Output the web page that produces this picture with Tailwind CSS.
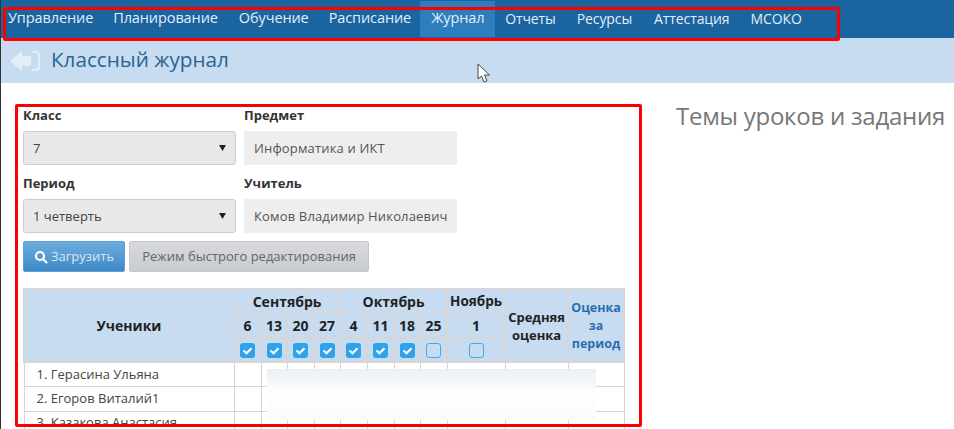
<!DOCTYPE html>
<html lang="ru">
  <head>
    <meta charset="UTF-8">
    <title>Классный журнал</title>
    <script src="https://cdn.jsdelivr.net/npm/@tailwindcss/browser@4"></script>
  </head>
  <body class="relative h-[429px] w-[954px] overflow-hidden bg-white font-['Open_Sans',sans-serif] text-[#333]">
    <div class="absolute left-0 top-0 z-30 h-full w-[1px] bg-[#333]"></div>

    <!-- Nav -->
    <nav class="flex h-[38px] bg-[#1a64a0] pl-[8px] pt-[1px] text-[14.5px] tracking-[-0.1px] text-[#e6eef6]">
      <a class="flex h-[36px] items-center pb-[2px]">Управление</a>
      <a class="ml-[20px] flex h-[36px] items-center pb-[2px]">Планирование</a>
      <a class="ml-[21px] flex h-[36px] items-center pb-[2px]">Обучение</a>
      <a class="ml-[20px] flex h-[36px] items-center pb-[2px]">Расписание</a>
      <a class="ml-[9px] flex h-[36px] w-[75px] items-center bg-[#2e7dbd] pb-[2px] pl-[11px]">Журнал</a>
      <a class="ml-[10px] flex h-[36px] items-center pb-[2px] text-[14px]">Отчеты</a>
      <a class="ml-[21px] flex h-[36px] items-center pb-[2px] text-[14px]">Ресурсы</a>
      <a class="ml-[22px] flex h-[36px] items-center pb-[2px] text-[14px]">Аттестация</a>
      <a class="ml-[21px] flex h-[36px] items-center pb-[2px] text-[14px]">МСОКО</a>
    </nav>

    <!-- Title bar -->
    <header class="flex h-[45px] items-center bg-[#c7dcf0] pl-[10px]">
      <svg class="h-[20px] w-[30px]" viewBox="0 0 30 20" fill="#e3eef8">
        <path d="M0 10 12 0v5h9v10h-9v5z"/>
        <path d="M22 1h4a3 3 0 0 1 3 3v12a3 3 0 0 1-3 3h-4" fill="none" stroke="#e3eef8" stroke-width="2"/>
      </svg>
      <h1 class="ml-[11px] pb-[1px] text-[20.7px] text-[#2a6496]">Классный журнал</h1>
    </header>

    <main class="flex pl-[23px] pt-[23px]">
      <section class="w-[601px] shrink-0">
        <div class="grid grid-cols-[213px_213px] gap-x-[8px] text-[13px]">
          <label class="h-[25px] font-bold leading-[18px]">Класс</label>
          <label class="h-[25px] font-bold leading-[18px]">Предмет</label>
          <div class="flex h-[34px] items-center justify-between rounded-[3px] border border-[#ccc] bg-[#e8e8e8] pl-[9px] pr-[9px] text-[#444]">
            <span class="pt-[2px]">7</span>
            <svg class="h-[6px] w-[7px]" viewBox="0 0 7 6"><path d="M0 0h7L3.500 6z" fill="#222"/></svg>
          </div>
          <div class="flex h-[34px] items-center rounded-[2px] bg-[#eee] pl-[10px] pt-[2px] tracking-[0.15px] text-[#555]">Информатика и ИКТ</div>
          <label class="mt-[9px] h-[25px] font-bold leading-[18px]">Период</label>
          <label class="mt-[9px] h-[25px] font-bold leading-[18px]">Учитель</label>
          <div class="flex h-[34px] items-center justify-between rounded-[3px] border border-[#ccc] bg-[#e8e8e8] pl-[9px] pr-[9px] text-[#444]">
            <span class="pt-[2px]">1 четверть</span>
            <svg class="h-[6px] w-[7px]" viewBox="0 0 7 6"><path d="M0 0h7L3.500 6z" fill="#222"/></svg>
          </div>
          <div class="flex h-[34px] items-center rounded-[2px] bg-[#eee] pl-[10px] pt-[2px] tracking-[0.15px] text-[#555]">Комов Владимир Николаевич</div>
        </div>

        <div class="mt-[8px] flex gap-[4px] text-[13px]">
          <button class="flex h-[31px] w-[102px] items-center justify-center gap-[3px] rounded-[2px] border border-[#5b9fd4] bg-gradient-to-b from-[#6cadde] to-[#3f89c6] text-[#dbe6ee]">
            <svg class="h-[14px] w-[14px]" viewBox="0 0 14 14" fill="none" stroke="#fff" stroke-width="2.2" stroke-linecap="round"><circle cx="6" cy="6" r="4"/><path d="m9 9 3.500 3.500"/></svg>
            Загрузить
          </button>
          <button class="h-[31px] w-[240px] rounded-[2px] border border-[#c4c8cc] bg-gradient-to-b from-[#d8dadd] to-[#c8cbcf] text-[#666]">Режим быстрого редактирования</button>
        </div>

        <table class="mt-[16px] w-[600px] table-fixed border-collapse text-[13px]">
          <colgroup>
            <col class="w-[210px]"><col class="w-[27px]"><col class="w-[26px]"><col class="w-[27px]"><col class="w-[26px]"><col class="w-[27px]"><col class="w-[27px]"><col class="w-[26px]"><col class="w-[27px]"><col class="w-[58px]"><col class="w-[63px]"><col class="w-[56px]">
          </colgroup>
          <thead class="bg-[#c7dcf0] font-semibold text-[#222] [&_th]:border-2 [&_th]:border-[#d6d6d6] [&_th]:p-0">
            <tr class="h-[24px] text-[14px]">
              <th rowspan="3">Ученики</th>
              <th colspan="4">Сентябрь</th>
              <th colspan="4">Октябрь</th>
              <th class="text-[13.5px]">Ноябрь</th>
              <th rowspan="3" class="text-[13px] leading-[18px]">Средняя<br>оценка</th>
              <th rowspan="3" class="text-[12.5px] leading-[18px] text-[#2a6db0]">Оценка<br>за<br>период</th>
            </tr>
            <tr class="h-[25px] text-[14px]">
              <th>6</th><th>13</th><th>20</th><th>27</th><th>4</th><th>11</th><th>18</th><th>25</th><th>1</th>
            </tr>
            <tr class="h-[24px]">
              <th><svg class="mx-auto h-[15px] w-[15px]" viewBox="0 0 15 15"><rect width="15" height="15" rx="3" fill="#2ea3ea"/><path d="m3.500 7.500 3 2.700 5-5" fill="none" stroke="#fff" stroke-width="2.200"/></svg></th>
              <th><svg class="mx-auto h-[15px] w-[15px]" viewBox="0 0 15 15"><rect width="15" height="15" rx="3" fill="#2ea3ea"/><path d="m3.500 7.500 3 2.700 5-5" fill="none" stroke="#fff" stroke-width="2.200"/></svg></th>
              <th><svg class="mx-auto h-[15px] w-[15px]" viewBox="0 0 15 15"><rect width="15" height="15" rx="3" fill="#2ea3ea"/><path d="m3.500 7.500 3 2.700 5-5" fill="none" stroke="#fff" stroke-width="2.200"/></svg></th>
              <th><svg class="mx-auto h-[15px] w-[15px]" viewBox="0 0 15 15"><rect width="15" height="15" rx="3" fill="#2ea3ea"/><path d="m3.500 7.500 3 2.700 5-5" fill="none" stroke="#fff" stroke-width="2.200"/></svg></th>
              <th><svg class="mx-auto h-[15px] w-[15px]" viewBox="0 0 15 15"><rect width="15" height="15" rx="3" fill="#2ea3ea"/><path d="m3.500 7.500 3 2.700 5-5" fill="none" stroke="#fff" stroke-width="2.200"/></svg></th>
              <th><svg class="mx-auto h-[15px] w-[15px]" viewBox="0 0 15 15"><rect width="15" height="15" rx="3" fill="#2ea3ea"/><path d="m3.500 7.500 3 2.700 5-5" fill="none" stroke="#fff" stroke-width="2.200"/></svg></th>
              <th><svg class="mx-auto h-[15px] w-[15px]" viewBox="0 0 15 15"><rect width="15" height="15" rx="3" fill="#2ea3ea"/><path d="m3.500 7.500 3 2.700 5-5" fill="none" stroke="#fff" stroke-width="2.200"/></svg></th>
              <th><div class="mx-auto h-[15px] w-[15px] rounded-[3px] border border-[#4aa8e6]"></div></th>
              <th><div class="mx-auto h-[15px] w-[15px] rounded-[3px] border border-[#4aa8e6]"></div></th>
            </tr>
          </thead>
          <tbody class="text-[#444] [&_td]:border [&_td]:border-[#d6d6d6]">
            <tr class="h-[24px]"><td class="pl-[12px]">1. Герасина Ульяна</td><td></td><td></td><td></td><td></td><td></td><td></td><td></td><td></td><td></td><td></td><td></td></tr>
            <tr class="h-[25px]"><td class="pl-[12px]">2. Егоров Виталий1</td><td></td><td></td><td></td><td></td><td></td><td></td><td></td><td></td><td></td><td></td><td></td></tr>
            <tr class="h-[24px]"><td class="pl-[12px]">3. Казакова Анастасия</td><td></td><td></td><td></td><td></td><td></td><td></td><td></td><td></td><td></td><td></td><td></td></tr>
          </tbody>
        </table>
      </section>
      <h2 class="-mt-[2px] ml-[52px] whitespace-nowrap text-[24px] leading-[24px] tracking-[-0.25px] text-[#777]">Темы уроков и задания</h2>
    </main>

    <!-- Redaction patch over the table -->
    <div class="absolute left-[267px] top-[369px] z-10 h-[51px] w-[329px] bg-gradient-to-b from-[#e9eff4] via-white to-[#fafafa]"></div>

    <!-- Annotation frames -->
    <div class="absolute left-[3px] top-[7px] z-20 h-[34px] w-[837px] rounded-[2px] border-[3px] border-[#f00]"></div>
    <div class="absolute left-[15px] top-[104px] z-20 h-[323px] w-[627px] rounded-[2px] border-[3px] border-[#f00]"></div>

    <!-- Mouse cursor -->
    <svg class="absolute left-[477px] top-[63px] z-30 h-[20px] w-[14px]" viewBox="0 0 14 20">
      <path d="M1 1v15l3.500-3 2.500 6 3-1.200-2.500-5.800H12.500z" fill="#fff" stroke="#444" stroke-width="1"/>
    </svg>
  </body>
</html>
